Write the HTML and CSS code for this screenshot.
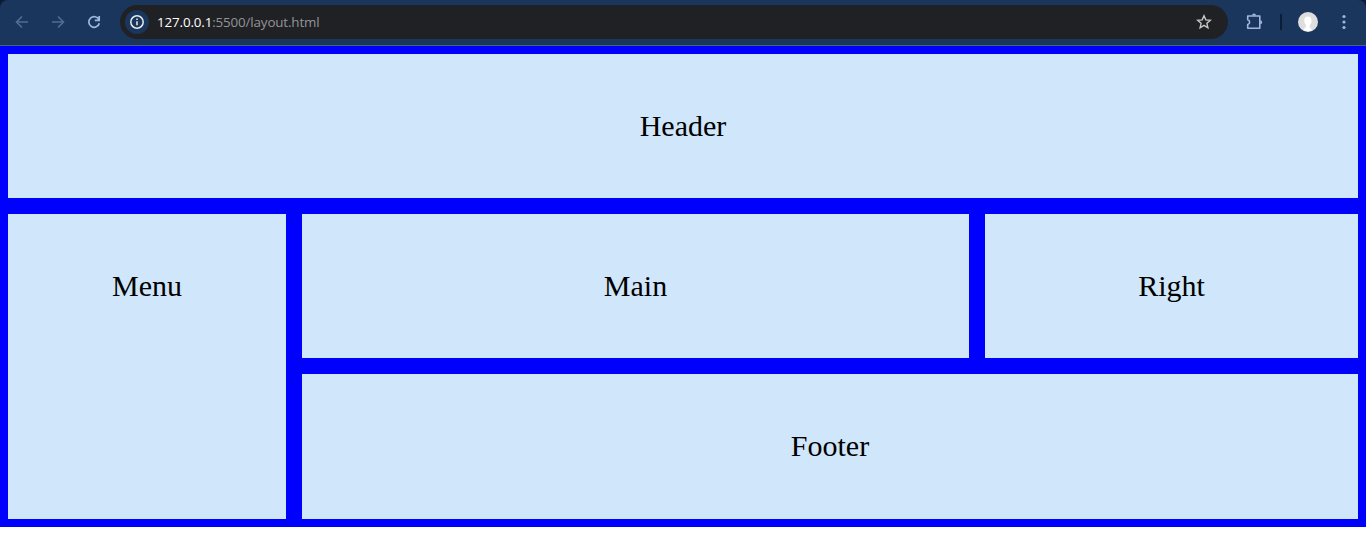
FILE: index.html
```html
<!DOCTYPE html>
<html lang="en">
<head>
<meta charset="utf-8">
<title>Layout</title>
<link rel="stylesheet" href="styles.css">
</head>
<body>
<div class="chrome">
<header class="toolbar">
  <svg class="icon back" viewBox="0 0 16 16"><path d="M14 8H2.8M8 2.5 2.5 8 8 13.5"/></svg>
  <svg class="icon forward" viewBox="0 0 16 16"><path d="M2 8h11.2M8 2.5 13.5 8 8 13.5"/></svg>
  <svg class="icon reload" viewBox="0 0 16 16"><path d="M12.9 5.6A5.3 5.3 0 1 0 13.3 9.2M13.2 2v4.4H8.8"/></svg>
  <div class="address">
    <span class="info"><svg viewBox="0 0 16 16"><circle cx="8" cy="8" r="6.2"/><path d="M8 7.2v4M8 4.6v1.5"/></svg></span>
    <span class="url"><span class="host">127.0.0.1</span>:5500/layout.html</span>
    <svg class="star" viewBox="0 0 16 16"><path d="m8 1.7 1.8 4.2 4.6.4-3.5 3 1 4.5L8 11.4l-3.9 2.4 1-4.5-3.5-3 4.6-.4z"/></svg>
  </div>
  <svg class="puzzle" viewBox="0 0 18 18"><path d="M2.7 3h12.1v12.3H2.7v-3.8a2.4 2.4 0 0 0 0-4.7z"/><path class="solid" d="M7 2.6a2 2 0 0 1 4 0zM15.2 7.2a2 2 0 0 1 0 4z"/></svg>
  <span class="divider"></span>
  <svg class="avatar" viewBox="0 0 20 20"><circle cx="10" cy="10" r="10" fill="#dedede"/><path d="M10 4.5c-2.8 0-4 2-3.7 4.5.2 2 .8 3.3 1.7 4l-.4 2.4-2.4 2.2c2.8 2 6.5 2 9 .3l-2.4-2.3-.2-2.4c1.3-1.2 2-2.8 1.9-4.8-.2-2.4-1.3-3.9-3.5-3.9z" fill="#fff"/></svg>
  <svg class="dots" viewBox="0 0 4 16"><circle cx="2" cy="2.5" r="1.6"/><circle cx="2" cy="8" r="1.6"/><circle cx="2" cy="13.5" r="1.6"/></svg>
</header>
</div>
<main class="grid">
  <div class="cell header">Header</div>
  <div class="cell menu">Menu</div>
  <div class="cell main">Main</div>
  <div class="cell right">Right</div>
  <div class="cell footer">Footer</div>
</main>
</body>
</html>
```
FILE: styles.css
```css
* { box-sizing: border-box; }
body { margin: 0; background: #fff; overflow: hidden; }
.chrome { background: #0b1c33; }
.toolbar {
  display: flex;
  align-items: center;
  height: 46px;
  padding: 0 20px 1px 14px;
  background: #1b365d;
  border-bottom: 1px solid #49617f;
  border-radius: 8px 8px 0 0;
}
svg { flex: none; fill: none; stroke-width: 1.6; }
.icon { width: 16px; height: 16px; margin-right: 20px; stroke: #526d98; }
.icon.reload { margin-right: 18px; stroke: #a0b6dc; stroke-width: 1.7; }
.address {
  display: flex;
  align-items: center;
  width: 1108px;
  height: 34px;
  padding: 0 16px 0 5px;
  border-radius: 17px;
  background: #202124;
}
.info {
  display: flex;
  align-items: center;
  justify-content: center;
  width: 24px;
  height: 24px;
  border-radius: 50%;
  background: #1b365d;
}
.info svg { width: 16px; height: 16px; stroke: #e8eaed; stroke-width: 1.5; }
.url {
  margin-left: 8px;
  color: #929497;
  font: 13.4px/18px "Open Sans", "Noto Sans", sans-serif;
  letter-spacing: -0.15px;
}
.host { color: #fff; }
.star { width: 16px; height: 16px; margin-left: auto; stroke: #c7c7c7; stroke-width: 1.4; }
.puzzle { width: 18px; height: 18px; margin-left: 17px; stroke: #a0b6dc; stroke-linejoin: round; }
.puzzle .solid { fill: #a0b6dc; stroke: none; }
.divider { width: 2px; height: 16px; margin-left: 17px; background: #0c1d37; }
.avatar { width: 20px; height: 20px; margin-left: 16px; }
.dots { width: 4px; height: 16px; margin-left: auto; fill: #a0b6dc; }
.grid {
  display: grid;
  grid-template-columns: 278px 667px 373px;
  grid-template-rows: 144px 144px 145px;
  grid-template-areas: "header header header" "menu main right" "menu footer footer";
  gap: 16px;
  padding: 8px;
  background: #00f;
}
.cell {
  padding-top: 55px;
  background: #d0e6fa;
  color: #000;
  font: 30px/34px "Liberation Serif", "Times New Roman", serif;
  text-align: center;
}
.header { grid-area: header; }
.menu { grid-area: menu; }
.main { grid-area: main; }
.right { grid-area: right; }
.footer { grid-area: footer; }
```
